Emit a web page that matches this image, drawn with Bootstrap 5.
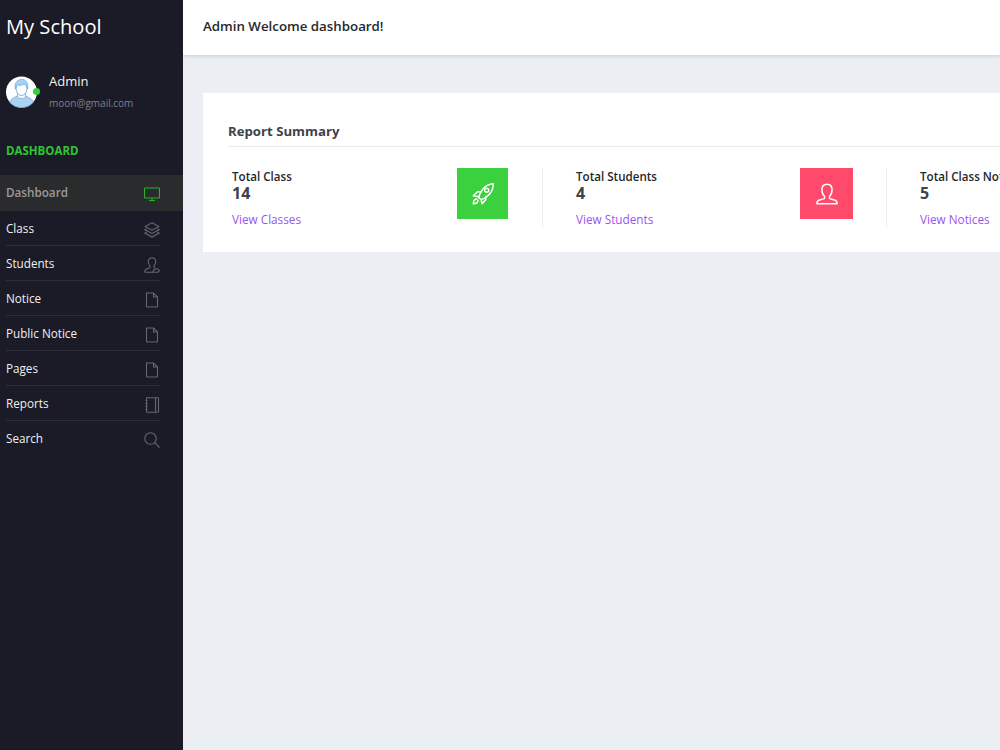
<!DOCTYPE html>
<html lang="en">
<head>
    <meta charset="UTF-8">
    <meta name="viewport" content="width=device-width, initial-scale=1.0">
    <title>My School</title>
    <link href="https://cdn.jsdelivr.net/npm/bootstrap@5.3.0/dist/css/bootstrap.min.css" rel="stylesheet">
    <style>
        html, body { height: 100%; }
        body { font-family: "Open Sans", "Liberation Sans", sans-serif; background: #ebeef3; overflow: hidden; }
        .app-wrap { width: 1000px; height: 750px; overflow: hidden; }
        .side-bar { width: 183px; flex: 0 0 183px; background: #1a1b27; color: #fff; }
        .brand-name { font-size: 20.1px; line-height: 28px; padding: 13px 0 0 6px; color: #fff; }
        .user-box { padding: 34px 0 0 6px; height: 94px; }
        .avatar-wrap { width: 31px; height: 32px; margin-top: 1px; }
        .online-dot { position: absolute; width: 7px; height: 7px; border-radius: 50%; background: #33d03a; right: -3px; top: 12px; }
        .user-name { font-size: 13px; line-height: 18px; color: #f2f2f2; margin-left: 12px; margin-top: -3px; }
        .user-mail { font-size: 10px; line-height: 14px; color: #7e8088; margin-top: 6px; margin-left: 12px; }
        .side-title { font-size: 11.5px; font-weight: 700; color: #2fc534; padding-left: 6px; line-height: 16px; margin-top: 8px; margin-bottom: 16px; }
        .side-menu { list-style: none; margin: 0; padding: 0; }
        .side-menu a { display: block; text-decoration: none; color: #f0f0f0; font-size: 11.7px; font-weight: 500; }
        .menu-row { margin: 0 23px 0 6px; height: 35px; border-bottom: 1px solid #2d2e39; padding-top: 1px; }
        .menu-row svg { width: 16px; height: 16px; margin-top: 2px; fill: none; stroke: #66676e; stroke-width: 1.1; }
        .side-menu .is-active { background: #2a2b2c; color: #9a9a9a; font-weight: 600; }
        .is-active .menu-row { height: 36px; }
        .is-active .menu-row svg { stroke: #2bb02f; }
        .main-area { width: 817px; flex: 0 0 817px; }
        .top-bar { height: 55px; background: #fff; box-shadow: 0 1px 4px rgba(0, 0, 0, .14); padding: 0 20px 2px; }
        .top-title { font-size: 13.3px; font-weight: 600; color: #26282c; }
        .report-box { margin: 38px 0 0 20px; width: 1100px; height: 159px; background: #fff; padding: 25px; }
        .report-title { font-size: 13.2px; font-weight: 700; color: #3f4248; line-height: 18px; height: 29px; padding-top: 4px; border-bottom: 1px solid #e9ebee; margin-bottom: 21px; }
        .stat-col { width: 344px; flex: 0 0 344px; height: 60px; padding-left: 33px; border-right: 1px solid #eef0f2; }
        .stat-col:first-child { width: 315px; flex-basis: 315px; padding-left: 4px; }
        .stat-label { font-size: 11.6px; font-weight: 600; color: #26282c; line-height: 16px; margin-top: 1px; white-space: nowrap; }
        .stat-num { font-size: 16px; font-weight: 700; color: #3f4248; line-height: 18px; margin-top: -1px; }
        .stat-link { display: block; font-size: 11.75px; color: #9a55f0; text-decoration: none; line-height: 16px; margin-top: 9px; white-space: nowrap; }
        .stat-icon { width: 51px; height: 51px; margin-right: 34px; flex: 0 0 auto; }
        .stat-col:nth-child(2) .stat-icon { width: 53px; margin-right: 33px; }
        .bg-rocket { background: #3bd03d; }
        .bg-person { background: #ff4a6b; }
        .stat-icon svg { width: 24px; height: 24px; fill: none; stroke: #fff; stroke-width: 1.6; stroke-linecap: round; stroke-linejoin: round; }
    </style>
</head>
<body>
    <div class="app-wrap d-flex">
        <div class="side-bar">
            <div class="brand-name">My School</div>
            <div class="user-box d-flex align-items-start">
                <div class="avatar-wrap position-relative">
                    <svg width="31" height="32" viewBox="0 0 31 32">
                        <circle cx="15.5" cy="16" r="15.5" fill="#fff"/>
                        <path d="M3.5 26c2-4 6-5 8-6h8c2 1 6 2 8 6a15.5 15.5 0 0 1-24 0z" fill="#a9d2f3" stroke="#5d9fd8" stroke-width=".7"/>
                        <path d="M11.5 17v4c1 2 7 2 8 0v-4z" fill="#fff" stroke="#5d9fd8" stroke-width=".7"/>
                        <ellipse cx="15.5" cy="12.5" rx="5.5" ry="7" fill="#fff" stroke="#5d9fd8" stroke-width=".8"/>
                        <path d="M9.5 13c-1.500-5 1-9 6-9.500 4-.5 7 3 6 9.500-1-3-2-4.500-3.500-5-2 1.500-5 1.500-6.500 1-1 1-1.500 2-2 4z" fill="#a9d2f3" stroke="#5d9fd8" stroke-width=".7"/>
                    </svg>
                    <span class="online-dot"></span>
                </div>
                <div>
                    <div class="user-name">Admin</div>
                    <div class="user-mail">moon@gmail.com</div>
                </div>
            </div>
            <div class="side-title">DASHBOARD</div>
            <ul class="side-menu">
                <li><a href="#" class="is-active"><div class="menu-row d-flex justify-content-between align-items-center">Dashboard
                    <svg viewBox="0 0 16 16"><rect x=".5" y="2" width="15" height="10" rx=".8"/><path d="M8 12v2M5 14.500h6"/></svg></div></a></li>
                <li><a href="#"><div class="menu-row d-flex justify-content-between align-items-center">Class
                    <svg viewBox="0 0 16 16"><path d="M8 .8l7 3.700-7 3.700-7-3.700z"/><path d="M2.500 6.800L1 7.800l7 3.700 7-3.700-1.500-1"/><path d="M2.500 10.100L1 11.100l7 3.900 7-3.900-1.500-1"/></svg></div></a></li>
                <li><a href="#"><div class="menu-row d-flex justify-content-between align-items-center">Students
                    <svg viewBox="0 0 16 16"><path d="M.8 15.200c0-2.200.8-3 2.400-3.500l2.600-1c.4-.5.3-1.200.2-1.800C4.800 7.900 4.300 6.500 4.300 5 4.300 2.400 5.800.8 8 .8s3.700 1.600 3.700 4.200c0 1.500-.5 2.900-1.700 3.900-.1.600-.2 1.300.2 1.800l1 .4"/><path d="M.8 15.200h8.400c-.3-1.200.4-2.500 2.300-3.200 1.800-.7 3.300.2 3.700 1.500 0 .9-.6 1.700-1.700 1.700H9.200"/></svg></div></a></li>
                <li><a href="#"><div class="menu-row d-flex justify-content-between align-items-center">Notice
                    <svg viewBox="0 0 16 16"><path d="M2.500 1h7l4 4v9.500a.5.5 0 0 1-.5.5H3a.5.5 0 0 1-.5-.5z"/><path d="M9.500 1v4h4"/></svg></div></a></li>
                <li><a href="#"><div class="menu-row d-flex justify-content-between align-items-center">Public Notice
                    <svg viewBox="0 0 16 16"><path d="M2.500 1h7l4 4v9.500a.5.5 0 0 1-.5.5H3a.5.5 0 0 1-.5-.5z"/><path d="M9.500 1v4h4"/></svg></div></a></li>
                <li><a href="#"><div class="menu-row d-flex justify-content-between align-items-center">Pages
                    <svg viewBox="0 0 16 16"><path d="M2.500 1h7l4 4v9.500a.5.5 0 0 1-.5.5H3a.5.5 0 0 1-.5-.5z"/><path d="M9.500 1v4h4"/></svg></div></a></li>
                <li><a href="#"><div class="menu-row d-flex justify-content-between align-items-center">Reports
                    <svg viewBox="0 0 16 16"><rect x="2.500" y=".8" width="12" height="14.400" rx=".6"/><path d="M11.500 1v14M1.500 3.500h2M1.500 6.500h2M1.500 9.500h2M1.500 12.500h2"/></svg></div></a></li>
                <li><a href="#"><div class="menu-row d-flex justify-content-between align-items-center border-0">Search
                    <svg viewBox="0 0 16 16"><circle cx="6.500" cy="6.500" r="5.700"/><path d="M10.700 10.700l4.800 4.800"/></svg></div></a></li>
            </ul>
        </div>
        <div class="main-area">
            <div class="top-bar d-flex align-items-center">
                <div class="top-title">Admin Welcome dashboard!</div>
            </div>
            <div class="report-box">
                <div class="report-title">Report Summary</div>
                <div class="d-flex">
                    <div class="stat-col d-flex justify-content-between">
                        <div>
                            <div class="stat-label">Total Class</div>
                            <div class="stat-num">14</div>
                            <a href="#" class="stat-link">View Classes</a>
                        </div>
                        <div class="stat-icon bg-rocket d-flex align-items-center justify-content-center">
                            <svg viewBox="0 0 26 26"><path d="M8.500 17.500C9 11 15 2.500 24 2c.5 9-7 15.500-12.500 17z"/><circle cx="17" cy="9" r="2.200"/><path d="M10.500 10.500H7L2.500 15l6.200 1M16 15.500v3.500L12 23.500l-1-4"/><path d="M6.500 18.500c-2.500 0-4 1.500-4 5 3.500 0 5-1.500 5-3.500"/></svg>
                        </div>
                    </div>
                    <div class="stat-col d-flex justify-content-between">
                        <div>
                            <div class="stat-label">Total Students</div>
                            <div class="stat-num">4</div>
                            <a href="#" class="stat-link">View Students</a>
                        </div>
                        <div class="stat-icon bg-person d-flex align-items-center justify-content-center">
                            <svg viewBox="0 0 26 26"><path d="M2 23.500c0-2.500 1-3.500 3-4l5-1.500c.5-.5.500-1.500.3-2.500-1.800-1.500-2.800-4-2.800-7C7.500 4.500 9.800 2.500 13 2.500s5.500 2 5.500 6c0 3-1 5.500-2.800 7-.2 1-.2 2 .3 2.500l5 1.500c2 .5 3 1.500 3 4z"/></svg>
                        </div>
                    </div>
                    <div class="stat-col border-0">
                        <div class="stat-label">Total Class Notices</div>
                        <div class="stat-num">5</div>
                        <a href="#" class="stat-link">View Notices</a>
                    </div>
                </div>
            </div>
        </div>
    </div>
    <script src="https://cdn.jsdelivr.net/npm/bootstrap@5.3.0/dist/js/bootstrap.bundle.min.js"></script>
</body>
</html>
